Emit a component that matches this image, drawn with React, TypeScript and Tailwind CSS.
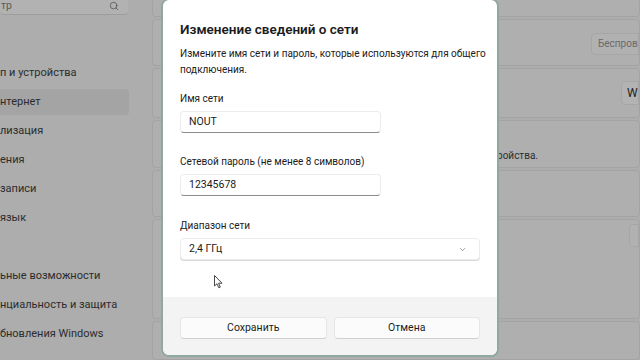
import { ChevronDown, Search } from "lucide-react";

const navItems = [
  { label: "п и устройства" },
  { label: "нтернет", selected: true },
  { label: "лизация" },
  { label: "ения" },
  { label: "записи" },
  { label: "язык" },
  { label: "", spacer: true },
  { label: "ьные возможности" },
  { label: "нциальность и защита" },
  { label: "бновления Windows" },
];

function Field({ label, value, className = "" }: { label: string; value: string; className?: string }) {
  return (
    <div className={`flex flex-col ${className}`}>
      <span className="text-[10px] text-[#1b1b1b] leading-4">{label}</span>
      <div className="mt-[4px] w-[201px] h-[22px] rounded-[4px] bg-white border border-[#ececec] border-b-[#8c8c8c] flex items-center px-2 text-[10.5px] text-[#1b1b1b]">
        {value}
      </div>
    </div>
  );
}

export default function App() {
  return (
    <div
      className="relative w-[640px] h-[360px] overflow-hidden bg-[#adadad]"
      style={{ fontFamily: 'Roboto, "Noto Sans", sans-serif' }}
    >
      {/* dimmed settings page */}
      <div className="flex h-full">
        <div className="w-[150px] flex flex-col">
          <div className="w-[128px] h-[15px] bg-[#b2b2b2] rounded-b-[4px] border-b border-[#9d9d9d] flex items-start justify-between pl-[1px] pr-[9px]">
            <span className="text-[10.5px] leading-[11px] text-[#5a5a5a]">тр</span>
            <Search size={10} strokeWidth={1.6} className="text-[#444] mt-[1px]" />
          </div>
          <div className="flex flex-col mt-[45px]">
            {navItems.map((item, i) =>
              item.spacer ? (
                <div key={i} className="h-[29px]" />
              ) : (
                <div
                  key={i}
                  className={`h-[26px] mb-[3px] w-[129px] flex items-center rounded-r-[4px] text-[11px] text-[#2c2c2c] ${
                    item.selected ? "bg-[#a4a4a4]" : ""
                  }`}
                >
                  {item.label}
                </div>
              )
            )}
          </div>
        </div>
        <div className="flex-1 flex flex-col gap-[2px] pl-[2px] -mt-[2px]">
          <div className="h-[20px] bg-[#afafaf] rounded-[4px] border border-[#a3a3a3]" />
          <div className="h-[48px] bg-[#afafaf] rounded-[4px] border border-[#a3a3a3] flex items-center justify-end">
            <div className="w-[48px] h-[22px] mt-[2px] rounded-l-[4px] border border-[#a6a6a6] bg-[#b1b1b1] text-[10px] text-[#6a6a6a] flex items-center pl-[6px] overflow-hidden whitespace-nowrap">
              Беспроводная
            </div>
          </div>
          <div className="h-[51px] bg-[#afafaf] rounded-[4px] border border-[#a3a3a3] flex items-center justify-end">
            <div className="w-[18px] h-[24px] rounded-l-[4px] border border-[#a6a6a6] bg-[#b3b3b3] text-[12px] text-[#1f1f1f] flex items-center pl-[5px] overflow-hidden">
              W
            </div>
          </div>
          <div className="h-[50px] bg-[#afafaf] rounded-[4px] border border-[#a3a3a3] flex items-end pb-[4px] pl-[334px] text-[10px] text-[#2e2e2e] whitespace-nowrap">
            стройства.
          </div>
          <div className="h-[48px] bg-[#afafaf] rounded-[4px] border border-[#a3a3a3]" />
          <div className="h-[103px] bg-[#afafaf] rounded-[4px] border border-[#a3a3a3] flex justify-end pt-[4px]">
            <div className="w-[10px] h-[23px] rounded-l-[4px] border border-[#a6a6a6] bg-[#b1b1b1]" />
          </div>
          <div className="h-[40px] bg-[#afafaf] rounded-[4px] border border-[#a3a3a3]" />
        </div>
      </div>

      {/* dialog */}
      <div className="absolute left-[161px] top-[-2px] w-[338px] h-[359px] rounded-[8px] border-2 border-[#8fa99f] bg-white overflow-hidden flex flex-col">
        <div className="flex-1 px-[17px] pt-[19px]">
          <h1 className="text-[13.5px] leading-5 font-semibold text-[#1b1b1b]">
            Изменение сведений о сети
          </h1>
          <p className="mt-[7px] text-[10px] leading-4 text-[#1b1b1b] -mr-[8px]">
            <span className="whitespace-nowrap">Измените имя сети и пароль, которые используются для общего</span>
            <br />
            подключения.
          </p>
          <div className="mt-[13px] flex flex-col gap-[21px]">
            <Field label="Имя сети" value="NOUT" />
            <Field label="Сетевой пароль (не менее 8 символов)" value="12345678" />
            <div className="flex flex-col mt-[1px]">
              <span className="text-[10px] text-[#1b1b1b] leading-4">Диапазон сети</span>
              <div className="mt-[4px] w-[300px] h-[22px] rounded-[4px] bg-white border border-[#ececec] shadow-[0_1px_0_#d8d8d8] flex items-center justify-between pl-2 pr-[12px] text-[10.5px] text-[#1b1b1b]">
                <span>2,4 ГГц</span>
                <ChevronDown size={9} strokeWidth={1.5} className="text-[#555]" />
              </div>
            </div>
          </div>
        </div>
        <div className="h-[58px] bg-[#f3f3f3] flex gap-[7px] px-[17px] pt-[20px]">
          <button className="w-[147px] h-[22px] rounded-[4px] bg-[#fbfbfb] border border-[#e6e6e6] border-b-[#d0d0d0] text-[10.5px] text-[#1b1b1b]">
            Сохранить
          </button>
          <button className="w-[147px] h-[22px] rounded-[4px] bg-[#fbfbfb] border border-[#e6e6e6] border-b-[#d0d0d0] text-[10.5px] text-[#1b1b1b]">
            Отмена
          </button>
        </div>
      </div>

      {/* mouse cursor */}
      <svg className="absolute left-[214px] top-[275px]" width="9" height="14" viewBox="0 0 9 14">
        <path d="M0.5 0.5 L0.5 11 L3 8.7 L4.8 12.8 L6.3 12.1 L4.6 8.2 L8 8.2 Z" fill="#fff" stroke="#333" strokeWidth="0.9" strokeLinejoin="round" />
      </svg>
    </div>
  );
}
